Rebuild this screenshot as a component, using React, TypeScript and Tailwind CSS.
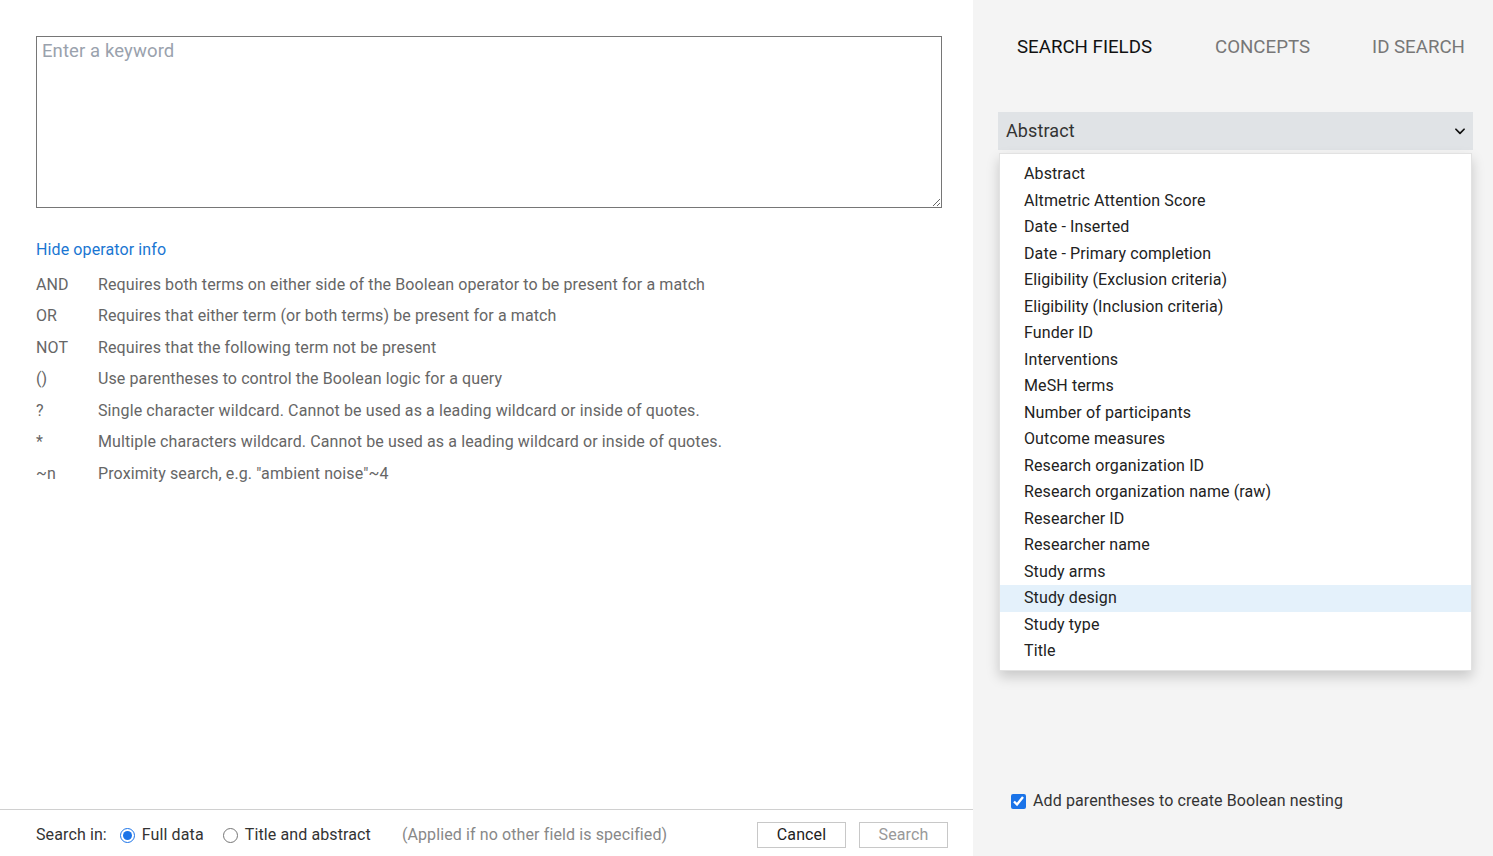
import React from 'react';

const operators = [
  { op: 'AND', desc: 'Requires both terms on either side of the Boolean operator to be present for a match' },
  { op: 'OR', desc: 'Requires that either term (or both terms) be present for a match' },
  { op: 'NOT', desc: 'Requires that the following term not be present' },
  { op: '()', desc: 'Use parentheses to control the Boolean logic for a query' },
  { op: '?', desc: 'Single character wildcard. Cannot be used as a leading wildcard or inside of quotes.' },
  { op: '*', desc: 'Multiple characters wildcard. Cannot be used as a leading wildcard or inside of quotes.' },
  { op: '~n', desc: 'Proximity search, e.g. "ambient noise"~4' },
];

const fields = [
  'Abstract',
  'Altmetric Attention Score',
  'Date - Inserted',
  'Date - Primary completion',
  'Eligibility (Exclusion criteria)',
  'Eligibility (Inclusion criteria)',
  'Funder ID',
  'Interventions',
  'MeSH terms',
  'Number of participants',
  'Outcome measures',
  'Research organization ID',
  'Research organization name (raw)',
  'Researcher ID',
  'Researcher name',
  'Study arms',
  'Study design',
  'Study type',
  'Title',
];

const App = () => {
  return (
    <div className="flex h-[856px] w-full overflow-hidden font-['Roboto',sans-serif] tracking-[0.11px]">
      {/* left: query editor */}
      <div className="flex w-[973px] shrink-0 flex-col bg-white">
        <div className="flex-1 px-9 pt-9">
          <textarea
            placeholder="Enter a keyword"
            className="block h-[172px] w-[906px] resize border border-[#767676] px-[5px] pt-[1px] pb-0 text-[18.5px] text-[#333] outline-none placeholder:text-[#9aa2ad]"
          />
          <div className="mt-[30px] text-[16px] text-[#1a76d2]">Hide operator info</div>
          <div className="mt-[7px] flex flex-col text-[16px] text-[#666]">
            {operators.map((o) => (
              <div key={o.op} className="flex h-[31.5px] items-center">
                <span className="w-[62px]">{o.op}</span>
                <span>{o.desc}</span>
              </div>
            ))}
          </div>
        </div>
        <div className="flex h-[47px] items-center border-t border-[#d0d0d0] pt-[4px] pl-9 pr-[25px] text-[16px]">
          <span className="text-[#333]">Search in:</span>
          <label className="ml-[13px] flex items-center gap-[7px] text-[#333]">
            <input type="radio" name="scope" defaultChecked className="h-[15px] w-[15px] accent-[#1a73e8]" />
            Full data
          </label>
          <label className="ml-[19px] flex items-center gap-[7px] text-[#333]">
            <input type="radio" name="scope" className="h-[15px] w-[15px]" />
            Title and abstract
          </label>
          <span className="ml-[31px] text-[#888]">(Applied if no other field is specified)</span>
          <div className="ml-auto flex gap-[13px]">
            <button className="h-[26px] w-[89px] border border-[#c8c8c8] bg-white text-[16px] text-[#222]">Cancel</button>
            <button className="h-[26px] w-[89px] border border-[#c8c8c8] bg-white text-[16px] text-[#999]">Search</button>
          </div>
        </div>
      </div>

      {/* right: field picker */}
      <div className="relative flex flex-1 flex-col bg-[#f4f4f4] pl-[25px] pr-[20px]">
        <div className="flex h-[94px] items-center pl-[19px] text-[18.7px] tracking-normal uppercase">
          <span className="text-[#111]">Search fields</span>
          <span className="ml-[63px] text-[#777]">Concepts</span>
          <span className="ml-[62px] text-[#777]">ID search</span>
        </div>
        <div className="mt-[18px] flex h-[38px] items-center justify-between bg-[#e0e3e6] pb-[1px] pl-[8px] pr-[6px] text-[18px] text-[#333]">
          <span>Abstract</span>
          <svg width="14" height="14" viewBox="0 0 24 24" fill="none" stroke="#111" strokeWidth="3" strokeLinecap="round" strokeLinejoin="round">
            <path d="M5 9l7 7 7-7" />
          </svg>
        </div>
        <div className="mt-[3px] ml-[1px] mr-[1px] border border-[#e2e2e2] bg-white pt-[7px] pb-[5px] text-[16px] text-[#222] shadow-[0_6px_12px_rgba(0,0,0,0.18)]">
          {fields.map((f) => (
            <div
              key={f}
              className={
                f === 'Study design'
                  ? 'flex h-[26.5px] items-center bg-[#e4f1fb] pl-[24px]'
                  : 'flex h-[26.5px] items-center pl-[24px]'
              }
            >
              {f}
            </div>
          ))}
        </div>
        <div className="flex-1" />
        <label className="mb-[43px] ml-[13px] flex items-center gap-[7px] text-[16px] text-[#333]">
          <input type="checkbox" defaultChecked className="h-[15px] w-[15px] accent-[#1a73e8]" />
          Add parentheses to create Boolean nesting
        </label>
      </div>
    </div>
  );
};

export default App;
